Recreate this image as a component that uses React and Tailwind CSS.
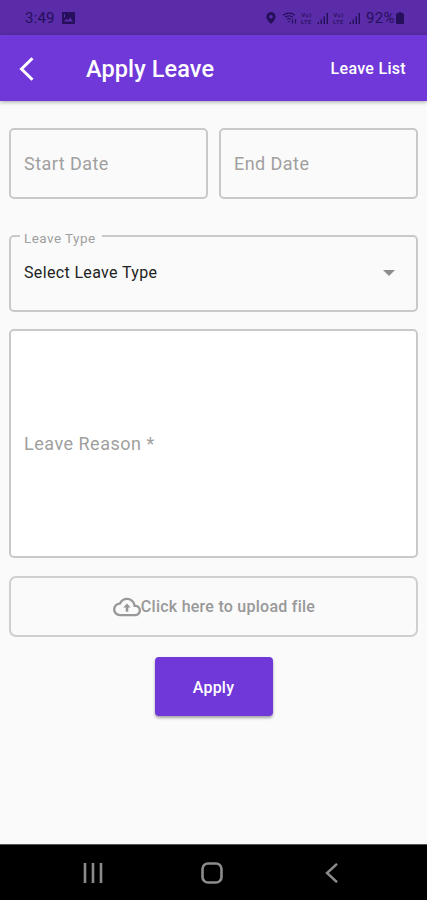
import React from 'react';

function StatusBar() {
  return (
    <div className="flex h-[35px] items-center bg-[#5a2ca8] pt-px pr-[23px] pl-[25px] text-[#26105c]">
      <span className="text-[15px] leading-5 tracking-[0.2px]">3:49</span>
      <svg className="ml-[7px] h-3 w-[13px]" viewBox="0 0 13 12">
        <path fillRule="evenodd" fill="currentColor" d="M1 0h11a1 1 0 0 1 1 1v10a1 1 0 0 1-1 1H1a1 1 0 0 1-1-1V1a1 1 0 0 1 1-1zM2 9.5h9L8.2 5.5 6 8.2 4.4 6.6zM2 2v4l1-1V2z" />
      </svg>
      <div className="ml-auto flex items-center">
        <svg className="h-3 w-[10px]" viewBox="0 0 10 12">
          <path fillRule="evenodd" fill="currentColor" d="M5 0a4.7 4.7 0 0 0-4.7 4.7C.3 8 5 12 5 12s4.7-4 4.7-7.3A4.7 4.7 0 0 0 5 0zm0 3a1.8 1.8 0 1 1 0 3.6A1.8 1.8 0 0 1 5 3z" />
        </svg>
        <svg className="ml-[6px] h-3 w-[16px]" viewBox="0 0 15 12" fill="none" stroke="currentColor">
          <path d="M.7 3.2a9 9 0 0 1 11.600 0M2.600 5.300a6 6 0 0 1 7.800 0M4.500 7.400a3.200 3.200 0 0 1 4 0" strokeWidth="1.200" />
          <path d="M10 11.500V7.500M13 7v4.500" strokeWidth="1.200" />
          <path d="M5.300 9h2.400L6.500 10.500z" fill="currentColor" stroke="none" />
        </svg>
        <Signal name="Vo)" />
        <Signal name="Vo)" />
        <span className="ml-1 text-[15px] leading-5 tracking-[0.4px]">92%</span>
        <svg className="ml-px h-3 w-2" viewBox="0 0 8 12">
          <path fill="currentColor" d="M2.500 0h3v1.300H7a1 1 0 0 1 1 1V11a1 1 0 0 1-1 1H1a1 1 0 0 1-1-1V2.300a1 1 0 0 1 1-1h1.500z" />
        </svg>
      </div>
    </div>
  );
}

function Signal({ name }) {
  return (
    <div className="flex items-center">
      <div className="flex w-[17px] flex-col items-center text-[6px] leading-[7px] font-medium tracking-[0.4px]">
        <span>{name}</span>
        <span>LTE</span>
      </div>
      <svg className="h-[11px] w-[15px]" viewBox="0 0 14 11">
        <path fill="currentColor" d="M2 9h1.500v2H2zM5 6.500h1.500V11H5zM8 3.500h1.500V11H8zM11 0h1.500v11H11z" />
      </svg>
    </div>
  );
}

function Header() {
  return (
    <header className="relative z-10 flex h-[66px] items-center bg-[#7038d8] pr-[21px] pl-[19px] text-white shadow-[0_1px_4px_rgba(0,0,0,0.35)]">
      <svg className="mt-0.5 h-6 w-4" viewBox="0 0 16 24" fill="none" stroke="currentColor" strokeWidth="3">
        <path d="M13.500 1.200 2.500 12l11 10.800" />
      </svg>
      <h1 className="mt-1 ml-[51px] text-[23.500px] font-medium tracking-[0.1px]">Apply Leave</h1>
      <span className="mt-0.5 ml-auto text-base font-medium tracking-[0.3px]">Leave List</span>
    </header>
  );
}

function NavBar() {
  return (
    <nav className="flex h-14 items-center border-t border-[#555] bg-black px-[83px] text-[#8c8c8c]">
      <svg className="h-5 w-5" viewBox="0 0 20 20" fill="none" stroke="currentColor" strokeWidth="2.600">
        <path d="M2 0v20M10 0v20M18 0v20" />
      </svg>
      <svg className="ml-[98px] h-[22px] w-[22px]" viewBox="0 0 22 22" fill="none" stroke="currentColor" strokeWidth="2.600">
        <rect x="1.500" y="1.500" width="19" height="19" rx="5.500" />
      </svg>
      <svg className="ml-[102px] h-5 w-[13px]" viewBox="0 0 13 20" fill="none" stroke="currentColor" strokeWidth="2.400">
        <path d="M12 .8 2 10l10 9.200" />
      </svg>
    </nav>
  );
}

function App() {
  return (
    <div className="flex h-[900px] w-[427px] flex-col overflow-hidden bg-[#fafafa] font-[Roboto,sans-serif]">
      <StatusBar />
      <Header />
      <main className="flex flex-1 flex-col px-[9px] pt-[27px]">
        <div className="flex gap-[11px]">
          {['Start Date', 'End Date'].map((label) => (
            <div key={label} className="flex h-[71px] flex-1 items-center rounded-[5px] border-2 border-[#c9c9c9] px-[13px] text-lg tracking-[0.450px] text-[#a0a0a0]">
              {label}
            </div>
          ))}
        </div>
        <div className="relative mt-9 flex h-[77px] items-center justify-between rounded-[5px] border-2 border-[#c9c9c9] pr-[21px] pl-[13px]">
          <span className="absolute -top-[9px] left-[9px] bg-[#fafafa] pr-[6px] pl-[4px] text-[13.500px] leading-5 tracking-[0.450px] text-[#a0a0a0]">
            Leave Type
          </span>
          <span className="-mt-0.5 text-base tracking-[0.350px] text-[#222]">Select Leave Type</span>
          <svg className="-mt-0.5 h-[6px] w-3" viewBox="0 0 12 6">
            <path d="M0 0h12L6 6z" fill="#8c8c8c" />
          </svg>
        </div>
        <div className="mt-[17px] flex h-[229px] items-center rounded-[5px] border-2 border-[#c9c9c9] bg-white px-[13px] text-lg tracking-[0.500px] text-[#a0a0a0]">
          Leave Reason *
        </div>
        <div className="mt-[18px] flex h-[61px] items-center justify-center rounded-[7px] border-2 border-[#cfcfcf] pl-px text-[#989898]">
          <svg className="h-7 w-7" viewBox="0 0 24 24" fill="currentColor">
            <path d="M19.350 10.040A7.490 7.490 0 0 0 12 4C9.110 4 6.600 5.640 5.350 8.040A5.994 5.994 0 0 0 0 14c0 3.310 2.690 6 6 6h13c2.760 0 5-2.240 5-5 0-2.640-2.050-4.780-4.650-4.960zM19 18H6c-2.210 0-4-1.790-4-4 0-2.050 1.530-3.760 3.560-3.970l1.070-.11.500-.95A5.469 5.469 0 0 1 12 6c2.620 0 4.880 1.860 5.390 4.430l.3 1.500 1.530.11A2.980 2.980 0 0 1 22 15c0 1.650-1.350 3-3 3z" />
            <path d="M12 9l3.200 3.400h-2.100V16h-2.200v-3.600H8.800z" />
          </svg>
          <span className="text-base font-medium tracking-[0.250px]">Click here to upload file</span>
        </div>
        <button className="mt-5 h-[59px] w-[118px] self-center rounded bg-[#7038d8] pt-0.5 text-base font-medium tracking-[0.200px] text-white shadow-[0_2px_3px_rgba(0,0,0,0.35)]">
          Apply
        </button>
      </main>
      <NavBar />
    </div>
  );
}

export default App;
